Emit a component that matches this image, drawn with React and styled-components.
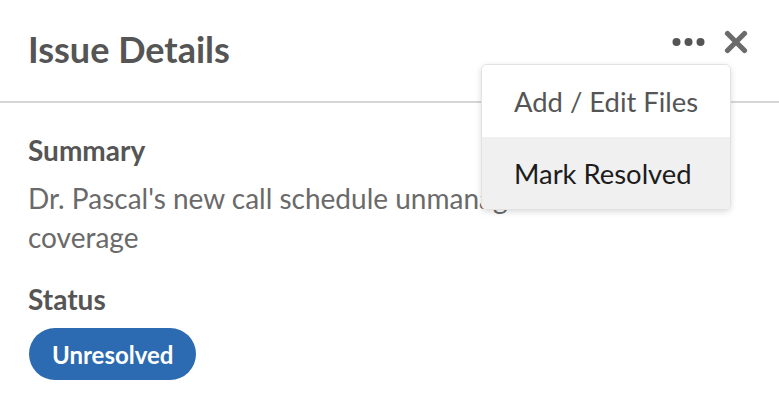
import React from "react";
import styled, { createGlobalStyle } from "styled-components";

const GlobalStyle = createGlobalStyle`
  html, body {
    margin: 0;
    padding: 0;
    background: #ffffff;
    font-family: Lato, "Open Sans", "Liberation Sans", sans-serif;
  }
  * { box-sizing: border-box; }
`;

const Panel = styled.div`
  width: 779px;
  height: 403px;
  background: #fff;
  overflow: hidden;
`;

const Header = styled.header`
  display: flex;
  justify-content: space-between;
  align-items: center;
  height: 103px;
  padding: 0 31px 2px 28px;
  border-bottom: 2px solid #d6d6d6;
`;

const Title = styled.h1`
  margin: 0;
  font-size: 36px;
  font-weight: 700;
  color: #555555;
  line-height: 1.2;
`;

const Actions = styled.div`
  position: relative;
  align-self: flex-start;
  margin-top: 30px;
  display: flex;
  align-items: center;
  gap: 18px;
  height: 24px;
`;

const IconButton = styled.button`
  display: flex;
  align-items: center;
  justify-content: center;
  padding: 0;
  margin: 0;
  border: 0;
  background: transparent;
  color: ${(p) => p.$color || "#666"};
  cursor: pointer;
`;

const Menu = styled.div`
  position: absolute;
  top: calc(100% + 10px);
  right: 17px;
  width: 250px;
  background: #fff;
  border: 1px solid #e2e2e2;
  border-radius: 6px;
  box-shadow: 0 2px 6px rgba(0, 0, 0, 0.14);
  overflow: hidden;
  z-index: 10;
`;

const MenuItem = styled.div`
  height: 72px;
  display: flex;
  align-items: center;
  padding: 0 32px;
  font-size: 27.4px;
  color: ${(p) => (p.$active ? "#1c1c1c" : "#555555")};
  background: ${(p) => (p.$active ? "#f0f0f0" : "#ffffff")};
  white-space: nowrap;
`;

const Content = styled.main`
  padding: 31px 28px 0 28px;
`;

const Label = styled.h2`
  margin: ${(p) => p.$mt || "0"} 0 0 0;
  font-size: 28px;
  font-weight: 700;
  color: #555555;
  line-height: 1.2;
`;

const Text = styled.p`
  margin: 11px 0 0 0;
  font-size: 28px;
  line-height: 39px;
  color: #6a6a6a;
  max-width: 700px;
`;

const Badge = styled.span`
  display: inline-flex;
  align-items: center;
  height: 52px;
  margin-top: 12px;
  margin-left: 1px;
  padding: 0 23px;
  border-radius: 26px;
  background: #2c6bb1;
  color: #ffffff;
  font-size: 24px;
  font-weight: 700;
`;

const DotsIcon = () => (
  <svg width="34" height="10" viewBox="0 0 34 10" aria-hidden="true">
    <circle cx="4.5" cy="5" r="4" fill="currentColor" />
    <circle cx="16.5" cy="5" r="4" fill="currentColor" />
    <circle cx="28.5" cy="5" r="4" fill="currentColor" />
  </svg>
);

const CloseIcon = () => (
  <svg width="24" height="24" viewBox="0 0 24 24" aria-hidden="true">
    <path
      d="M3.5 3.5 L20.5 20.5 M20.5 3.5 L3.5 20.5"
      stroke="currentColor"
      strokeWidth="5.2"
      strokeLinecap="round"
      fill="none"
    />
  </svg>
);

export default function App() {
  return (
    <Panel>
      <GlobalStyle />
      <Header>
        <Title>Issue Details</Title>
        <Actions>
          <IconButton $color="#555" aria-label="More options">
            <DotsIcon />
          </IconButton>
          <IconButton $color="#6b6b6b" aria-label="Close">
            <CloseIcon />
          </IconButton>
          <Menu>
            <MenuItem>Add / Edit Files</MenuItem>
            <MenuItem $active>Mark Resolved</MenuItem>
          </Menu>
        </Actions>
      </Header>
      <Content>
        <Label>Summary</Label>
        <Text>Dr. Pascal's new call schedule unmanageable for coverage</Text>
        <Label $mt="26px">Status</Label>
        <Badge>Unresolved</Badge>
      </Content>
    </Panel>
  );
}
